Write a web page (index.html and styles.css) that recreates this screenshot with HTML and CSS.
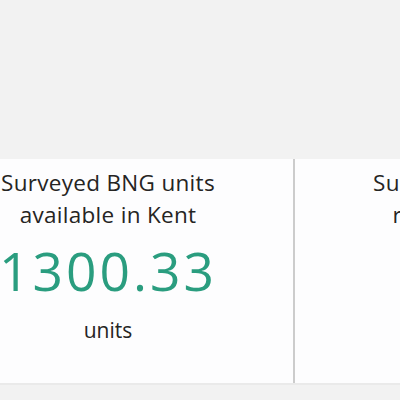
FILE: index.html
```html
<!DOCTYPE html>
<html>
<head>
<meta charset="utf-8">
<link rel="stylesheet" href="styles.css">
</head>
<body>
<div class="page">
  <div class="panel">
    <div class="card">
      <div class="title">Surveyed BNG units<br>available in Kent</div>
      <div class="value">1300.33</div>
      <div class="unit">units</div>
    </div>
    <div class="divider"></div>
    <div class="card">
      <div class="title">Surveyed BNG units<br>required in Kent</div>
      <div class="value">950.0</div>
      <div class="unit">units</div>
    </div>
  </div>
</div>
</body>
</html>
```
FILE: styles.css
```css
html, body {
  margin: 0;
  padding: 0;
  background: #f2f2f2;
  width: 400px;
  height: 400px;
  overflow: hidden;
}
.page {
  padding-top: 159px;
  font-family: "Open Sans", "Liberation Sans", sans-serif;
}
.panel {
  display: flex;
  margin-left: -77px;
  width: 800px;
  height: 224px;
  background: #fdfdfe;
  border-bottom: 2px solid #eaeaea;
}
.card {
  width: 370px;
  display: flex;
  flex-direction: column;
  align-items: center;
  padding-top: 8px;
  box-sizing: border-box;
}
.divider {
  width: 2px;
  background: #cccccc;
}
.title {
  font-size: 22.5px;
  letter-spacing: 0.3px;
  line-height: 32px;
  color: #252423;
  text-align: center;
}
.value {
  font-size: 53.33px;
  font-weight: 400;
  letter-spacing: 3px;
  line-height: 72px;
  color: #2a9d7f;
  margin-top: 4px;
}
.unit {
  font-size: 21px;
  line-height: 28px;
  color: #252423;
  margin-top: 9px;
}
```
